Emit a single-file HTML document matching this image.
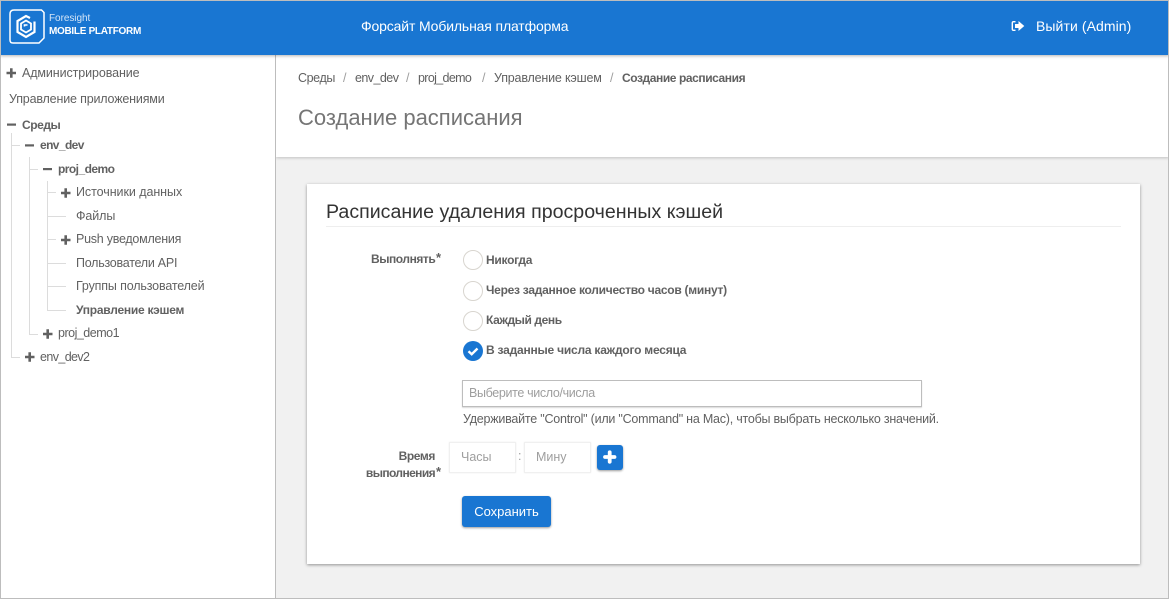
<!DOCTYPE html>
<html lang="ru"><head><meta charset="utf-8"><title>Создание расписания</title>
<style>
html,body{margin:0;padding:0;width:1169px;height:599px;overflow:hidden;background:#fff}
body{font-family:"Liberation Sans",sans-serif;position:relative;color:#616161;font-size:12.5px}
div,span.a,svg.a{position:absolute;white-space:nowrap}
.t{line-height:16px;height:16px}
.b{font-weight:bold}
.tb{font-weight:bold;font-size:12px}
.tl{background:#dcdcdc}
.rb{width:18px;height:18px;border:1px solid #d8d5cf;border-radius:50%;left:463px;background:#fff}
.ra{left:486px;font-weight:bold;font-size:12px;color:#616161;letter-spacing:-.27px}
</style></head><body>
<!-- main bg -->
<div style="left:276px;top:157px;width:893px;height:442px;background:#f1f1f1"></div>
<div style="left:276px;top:55px;width:893px;height:102px;background:#fff;box-shadow:0 1px 3px rgba(0,0,0,.2)"></div>
<!-- sidebar -->
<div style="left:0;top:55px;width:275px;height:544px;background:#fff;border-right:1px solid #bdbdbd"></div>
<!-- header -->
<div style="left:0;top:1px;width:1169px;height:54px;background:#1976d2;box-shadow:0 1px 3px rgba(0,0,0,.3)"></div>
<svg class="a" style="left:8px;top:8px" width="38" height="38" viewBox="0 0 38 38" fill="none" stroke="#fff">
<path d="M6 2H33.500L36 4.500V30L31 35H5Q2 35 2 32V6Q2 2 6 2Z" stroke-width="1.500"/>
<path d="M22 10L18 8L9.500 13V24L18 29L26.500 24V13.500" stroke-width="2.200"/>
<path d="M18 12.500L23 15.500V21.500L18 24.500L13 21.500V15.500Z" stroke-width="1.800"/>
<path d="M16.500 18.500V17H19.500" stroke-width="1.600"/>
</svg>
<div class="t" style="left:49px;top:11px;font-size:10px;color:#d4e5f7;letter-spacing:-.05px">Foresight</div>
<div class="t b" style="left:49px;top:24px;font-size:10px;color:#fff;letter-spacing:-.3px">MOBILE PLATFORM</div>
<div class="t" style="left:361px;top:18px;font-size:14px;color:#fff;letter-spacing:-.14px">Форсайт Мобильная платформа</div>
<svg class="a" style="left:1011px;top:20px" width="14" height="12" viewBox="0 0 14 12">
<path d="M4.500 1.700H2.500Q1.300 1.700 1.300 3V9Q1.300 10.300 2.500 10.300H4.500" fill="none" stroke="#fff" stroke-width="1.400"/>
<path d="M4 4H7.500V1L13.300 6L7.500 11V8H4Z" fill="#fff"/>
</svg>
<div class="t" style="left:1036px;top:18px;font-size:14px;color:#fff;letter-spacing:.08px">Выйти (Admin)</div>

<!-- tree lines -->
<div class="tl" style="left:11px;top:133px;width:1px;height:224px"></div>
<div class="tl" style="left:11px;top:145px;width:9px;height:1px"></div>
<div class="tl" style="left:11px;top:357px;width:9px;height:1px"></div>
<div class="tl" style="left:29px;top:157px;width:1px;height:177px"></div>
<div class="tl" style="left:29px;top:169px;width:9px;height:1px"></div>
<div class="tl" style="left:29px;top:334px;width:9px;height:1px"></div>
<div class="tl" style="left:47px;top:181px;width:1px;height:129px"></div>
<div class="tl" style="left:47px;top:192px;width:9px;height:1px"></div>
<div class="tl" style="left:47px;top:216px;width:19px;height:1px"></div>
<div class="tl" style="left:47px;top:239px;width:9px;height:1px"></div>
<div class="tl" style="left:47px;top:263px;width:19px;height:1px"></div>
<div class="tl" style="left:47px;top:286px;width:19px;height:1px"></div>
<div class="tl" style="left:47px;top:310px;width:19px;height:1px"></div>

<!-- tree icons -->
<svg class="a" style="left:0;top:60px" width="80" height="310" viewBox="0 60 80 310" fill="#616161">
<path d="M6.500 71.700H10V68.200H12.600V71.700H16V74.300H12.600V77.800H10V74.300H6.500Z"/>
<rect x="7" y="123.500" width="9" height="2.200"/>
<rect x="25" y="144.300" width="9" height="2.200"/>
<rect x="43" y="168" width="9" height="2.200"/>
<path d="M61 191.700H64.400V188.200H67V191.700H70.500V194.300H67V197.800H64.400V194.300H61Z"/>
<path d="M61 238.700H64.400V235.200H67V238.700H70.500V241.300H67V244.800H64.400V241.300H61Z"/>
<path d="M43 332.700H46.400V329.200H49V332.700H52.500V335.300H49V338.800H46.400V335.300H43Z"/>
<path d="M25 355.700H28.400V352.200H31V355.700H34.500V358.300H31V361.800H28.400V358.300H25Z"/>
</svg>

<!-- tree text -->
<div class="t" style="left:22px;top:65px;letter-spacing:-.1px">Администрирование</div>
<div class="t" style="left:9px;top:91px;letter-spacing:-.17px">Управление приложениями</div>
<div class="t tb" style="left:22px;top:117px;letter-spacing:-.45px">Среды</div>
<div class="t tb" style="left:40px;top:137px;letter-spacing:-.6px">env_dev</div>
<div class="t tb" style="left:58px;top:161px;letter-spacing:-.55px">proj_demo</div>
<div class="t" style="left:76px;top:184px;letter-spacing:-.06px">Источники данных</div>
<div class="t" style="left:76px;top:208px;letter-spacing:-.1px">Файлы</div>
<div class="t" style="left:76px;top:231px;letter-spacing:-.25px">Push уведомления</div>
<div class="t" style="left:76px;top:255px;letter-spacing:-.25px">Пользователи API</div>
<div class="t" style="left:76px;top:278px;letter-spacing:-.15px">Группы пользователей</div>
<div class="t tb" style="left:76px;top:302px;letter-spacing:-.25px">Управление кэшем</div>
<div class="t" style="left:58px;top:325px;letter-spacing:-.5px">proj_demo1</div>
<div class="t" style="left:40px;top:349px;letter-spacing:-.6px">env_dev2</div>

<!-- breadcrumb -->
<div class="t" style="left:298px;top:70px;letter-spacing:-.4px">Среды</div>
<div class="t" style="left:343px;top:70px;color:#9e9e9e">/</div>
<div class="t" style="left:355px;top:70px;letter-spacing:-.55px">env_dev</div>
<div class="t" style="left:406px;top:70px;color:#9e9e9e">/</div>
<div class="t" style="left:418px;top:70px;letter-spacing:-.65px">proj_demo</div>
<div class="t" style="left:482px;top:70px;color:#9e9e9e">/</div>
<div class="t" style="left:494px;top:70px;letter-spacing:-.18px">Управление кэшем</div>
<div class="t" style="left:610px;top:70px;color:#9e9e9e">/</div>
<div class="t tb" style="left:622px;top:70px;letter-spacing:-.42px">Создание расписания</div>
<div style="left:298px;top:105px;font-size:22px;line-height:26px;color:#757575">Создание расписания</div>

<!-- card -->
<div style="left:307px;top:184px;width:833px;height:380px;background:#fff;box-shadow:0 1px 3px rgba(0,0,0,.4)"></div>
<div style="left:326px;top:201px;font-size:19.600px;line-height:22px;color:#333">Расписание удаления просроченных кэшей</div>
<div style="left:326px;top:226px;width:795px;height:1px;background:#eee"></div>

<div class="t tb" style="left:371px;top:251px;letter-spacing:-.45px">Выполнять</div>
<div class="t b" style="left:436px;top:250px;font-size:13px">*</div>

<div class="rb" style="top:250px"></div>
<div class="t ra" style="top:252px">Никогда</div>
<div class="rb" style="top:281px"></div>
<div class="t ra" style="top:282px">Через заданное количество часов (минут)</div>
<div class="rb" style="top:311px"></div>
<div class="t ra" style="top:312px;letter-spacing:-.4px">Каждый день</div>
<svg class="a" style="left:463px;top:341px" width="20" height="20" viewBox="0 0 20 20"><circle cx="10" cy="10" r="10" fill="#1976d2"/><path d="M5.500 10.200L8.700 13.200L14.500 7.500" fill="none" stroke="#fff" stroke-width="2.400"/></svg>
<div class="t ra" style="top:342px;letter-spacing:-.22px">В заданные числа каждого месяца</div>

<div style="left:462px;top:380px;width:458px;height:25px;border:1px solid #bdbdbd;box-shadow:0 1px 1px rgba(0,0,0,.15);background:#fff"></div>
<div class="t" style="left:469px;top:385px;color:#9e9e9e;letter-spacing:-.35px">Выберите число/числа</div>
<div class="t" style="left:463px;top:411px;letter-spacing:-.225px">Удерживайте "Control" (или "Command" на Mac), чтобы выбрать несколько значений.</div>

<div class="t tb" style="right:734px;top:448px;letter-spacing:-.4px">Время</div>
<div class="t tb" style="right:734px;top:465px;letter-spacing:-.6px">выполнения</div>
<div class="t b" style="left:436px;top:464px;font-size:13px">*</div>

<div style="left:449px;top:442px;width:65px;height:29px;border:1px solid #f0f0f0;box-shadow:0 0 1px rgba(0,0,0,.1);background:#fff"></div>
<div class="t" style="left:461px;top:449px;color:#9e9e9e">Часы</div>
<div class="t" style="left:518px;top:448px;color:#9e9e9e">:</div>
<div style="left:524px;top:442px;width:65px;height:29px;border:1px solid #f0f0f0;box-shadow:0 0 1px rgba(0,0,0,.1);background:#fff"></div>
<div class="t" style="left:536px;top:449px;color:#9e9e9e">Мину</div>
<div style="left:597px;top:445px;width:26px;height:25px;background:#1976d2;border-radius:3px;box-shadow:0 1px 2px rgba(0,0,0,.4)"></div>
<svg class="a" style="left:597px;top:445px" width="26" height="25" viewBox="0 0 26 25"><path d="M8 12H17.500M12.700 7.300V16.800" stroke="#fff" stroke-width="3.800" stroke-linecap="round" fill="none"/></svg>

<div style="left:462px;top:496px;width:89px;height:31px;background:#1976d2;border-radius:3px;box-shadow:0 1px 2px rgba(0,0,0,.4);color:#fff;font-size:13px;line-height:31px;text-align:center">Сохранить</div>

<!-- window frame -->
<div style="left:0;top:0;width:1169px;height:1px;background:#bdbdbd"></div>
<div style="left:0;top:0;width:1px;height:599px;background:#bdbdbd"></div>
<div style="left:1168px;top:0;width:1px;height:599px;background:#bdbdbd"></div>
<div style="left:0;top:598px;width:1169px;height:1px;background:#bdbdbd"></div>
</body></html>
